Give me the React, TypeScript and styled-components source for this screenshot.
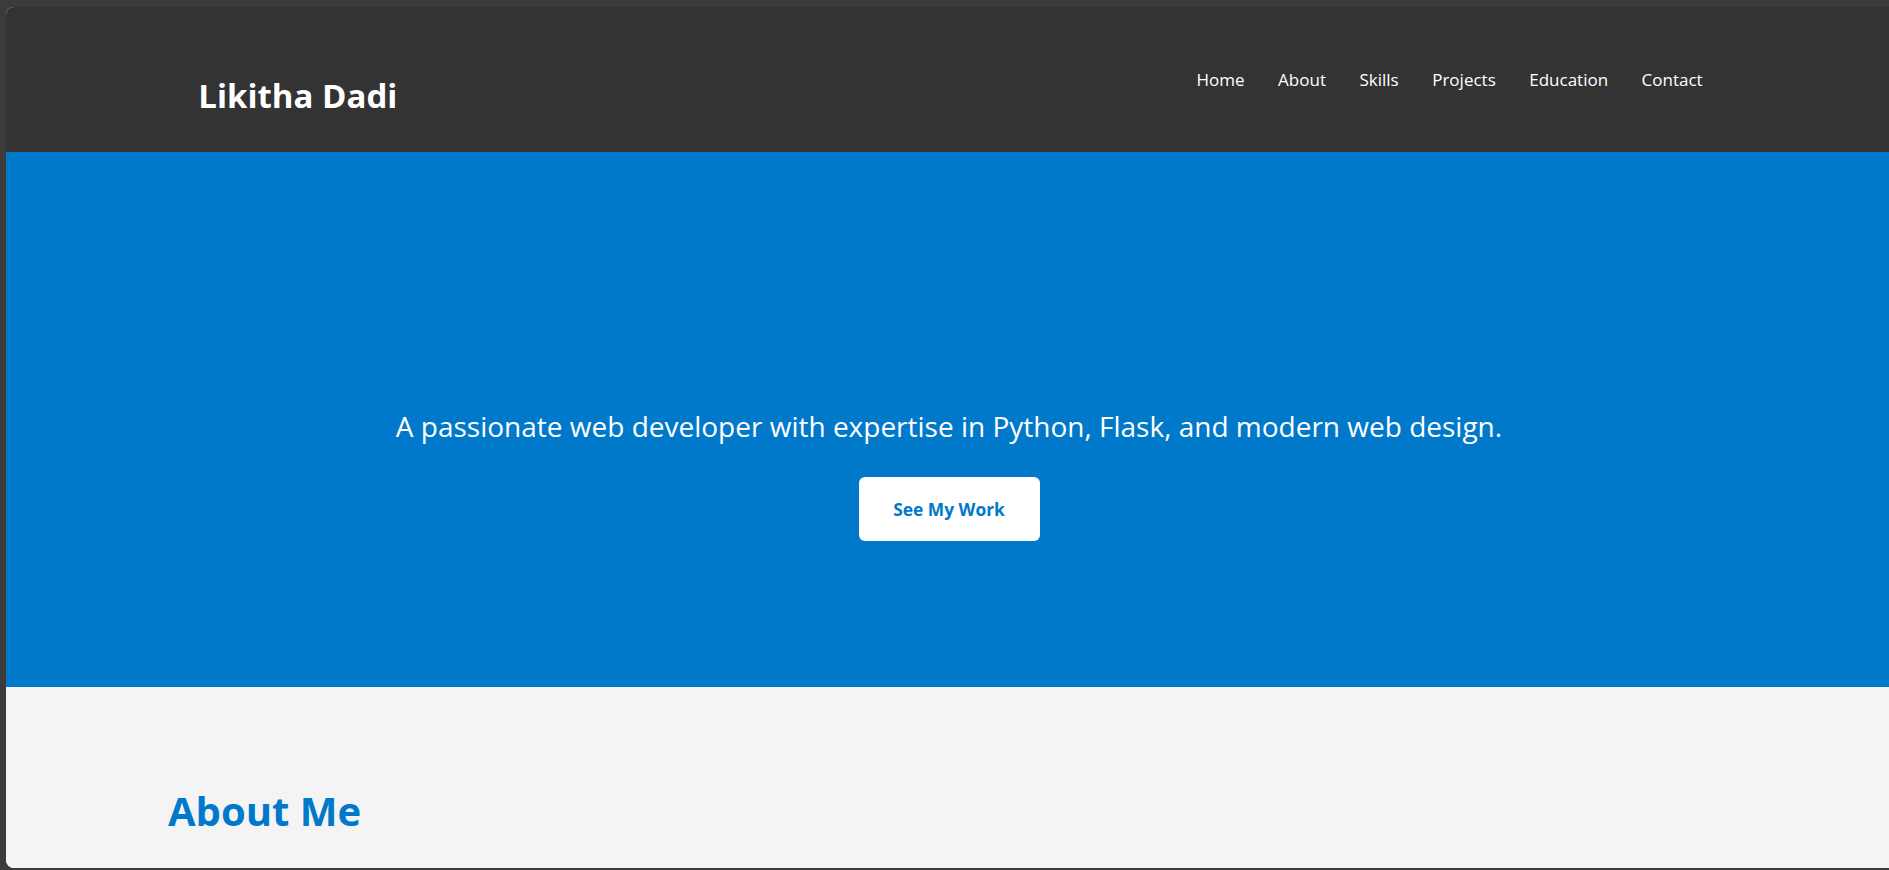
import React from "react";
import styled, { createGlobalStyle } from "styled-components";

const Global = createGlobalStyle`
  html, body { margin: 0; padding: 0; }
  body {
    background: #3b3b3b;
    font-family: "Open Sans", "Noto Sans", sans-serif;
  }
`;

const Frame = styled.div`
  height: 870px;
  box-sizing: border-box;
  padding: 7px 0 2px 6px;
  background: #3b3b3b;
`;

const Window = styled.div`
  height: 100%;
  display: flex;
  flex-direction: column;
  border-radius: 8px 0 0 8px;
  overflow: hidden;
  background: #f4f4f4;
`;

const Header = styled.header`
  flex: 0 0 145px;
  background: #333333;
  display: flex;
  justify-content: center;
`;

const HeaderInner = styled.div`
  width: 80%;
  display: flex;
  align-items: center;
  justify-content: space-between;
`;

const Logo = styled.h1`
  margin: 33px 0 0 4px;
  font-size: 33px;
  font-weight: 700;
  color: #ffffff;
  line-height: 1.2;
`;

const Nav = styled.nav`
  display: flex;
  gap: 33.5px;
  margin-right: -2px;
`;

const NavLink = styled.a`
  color: #ffffff;
  font-size: 17px;
  text-decoration: none;
  line-height: 1.4;
  cursor: pointer;
`;

const Hero = styled.section`
  flex: 0 0 535px;
  background: #0179cb;
  display: flex;
  flex-direction: column;
  align-items: center;
  justify-content: center;
  padding: 110px 0 0 3px;
  box-sizing: border-box;
`;

const Tagline = styled.p`
  margin: 0 0 32px;
  font-size: 28px;
  color: #ffffff;
  line-height: 1.3;
`;

const Button = styled.a`
  display: flex;
  align-items: center;
  justify-content: center;
  width: 181px;
  height: 64px;
  box-sizing: border-box;
  background: #ffffff;
  color: #0179cb;
  border-radius: 6px;
  font-size: 17.4px;
  font-weight: 700;
  text-decoration: none;
  cursor: pointer;
`;

const About = styled.section`
  flex: 1;
  background: #f4f4f4;
  padding: 100px 0 0 162px;
`;

const SectionTitle = styled.h2`
  margin: 0;
  font-size: 40px;
  font-weight: 700;
  color: #0179cb;
  line-height: 1.2;
`;

const links = ["Home", "About", "Skills", "Projects", "Education", "Contact"];

export default function App() {
  return (
    <>
      <Global />
      <Frame>
        <Window>
          <Header>
            <HeaderInner>
              <Logo>Likitha Dadi</Logo>
              <Nav>
                {links.map((l) => (
                  <NavLink key={l}>{l}</NavLink>
                ))}
              </Nav>
            </HeaderInner>
          </Header>
          <Hero>
            <Tagline>
              A passionate web developer with expertise in Python, Flask, and modern web design.
            </Tagline>
            <Button>See My Work</Button>
          </Hero>
          <About>
            <SectionTitle>About Me</SectionTitle>
          </About>
        </Window>
      </Frame>
    </>
  );
}
